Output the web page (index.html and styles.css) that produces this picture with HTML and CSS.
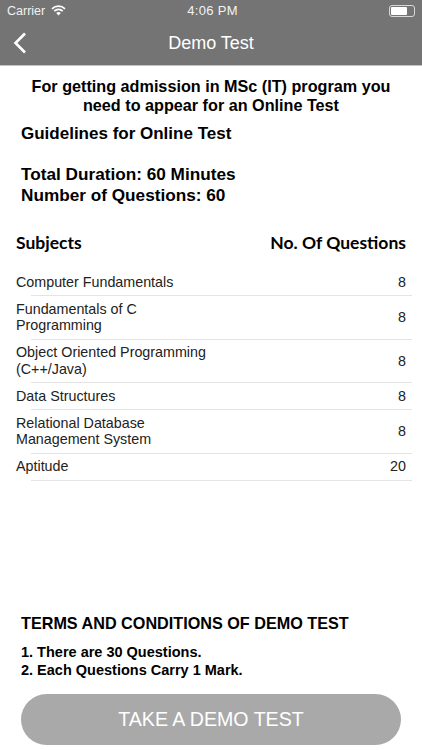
FILE: index.html
```html
<!DOCTYPE html>
<html lang="en">
<head>
    <meta charset="UTF-8">
    <meta name="viewport" content="width=device-width, initial-scale=1.0">
    <title>Demo Test</title>
    <link rel="stylesheet" href="styles.css">
</head>
<body>
<div class="screen">
    <!-- Status bar + nav -->
    <header class="top">
        <div class="status">
            <div class="status-left">
                <span>Carrier</span>
                <svg class="wifi" width="15" height="11" viewBox="0 0 15 11">
                    <path d="M1 3.8a9.2 9.2 0 0 1 13 0" fill="none" stroke="#fff" stroke-width="1.7"/>
                    <path d="M3.3 6.1a5.9 5.9 0 0 1 8.4 0" fill="none" stroke="#fff" stroke-width="1.7"/>
                    <path d="M5.2 8l2.3 2.6L9.8 8a3.3 3.3 0 0 0-4.6 0z" fill="#fff"/>
                </svg>
            </div>
            <span class="clock">4:06 PM</span>
            <div class="status-right">
                <div class="battery"><div class="battery-fill"></div></div>
            </div>
        </div>
        <div class="nav">
            <svg class="back" width="14" height="22" viewBox="0 0 14 22">
                <path d="M12 1.5L2.5 11l9.5 9.5" fill="none" stroke="#fff" stroke-width="2.6"/>
            </svg>
            <span class="nav-title">Demo Test</span>
        </div>
    </header>

    <h1 class="intro">For getting admission in MSc (IT) program you need to appear for an Online Test</h1>

    <div class="guide">
        <p class="guide-title">Guidelines for Online Test</p>
        <p class="guide-gap">Total Duration: 60 Minutes</p>
        <p>Number of Questions: 60</p>
    </div>

    <div class="table-head">
        <span>Subjects</span>
        <span>No. Of Questions</span>
    </div>

    <div class="rows">
        <div class="row"><span>Computer Fundamentals</span><span>8</span></div>
        <div class="row"><span>Fundamentals of C<br>Programming</span><span>8</span></div>
        <div class="row"><span>Object Oriented Programming<br>(C++/Java)</span><span>8</span></div>
        <div class="row"><span>Data Structures</span><span>8</span></div>
        <div class="row"><span>Relational Database<br>Management System</span><span>8</span></div>
        <div class="row"><span>Aptitude</span><span>20</span></div>
    </div>

    <!-- Terms + button -->
    <div class="bottom">
        <h2 class="terms-title">TERMS AND CONDITIONS OF DEMO TEST</h2>
        <p class="terms">1. There are 30 Questions.<br>2. Each Questions Carry 1 Mark.</p>
        <button class="demo-btn">TAKE A DEMO TEST</button>
    </div>
</div>
</body>
</html>
```

FILE: styles.css
```css
body {
    margin: 0;
    background-color: #fff;
    color: #000;
    font-family: 'Liberation Sans', Arial, sans-serif;
}

.screen {
    display: flex;
    flex-direction: column;
    height: 750px;
    overflow: hidden;
}

/* Header */
.top {
    height: 65px;
    background-color: #747474;
    border-bottom: 1px solid #c4c4c4;
    color: #fff;
}

.status {
    display: flex;
    align-items: center;
    justify-content: space-between;
    height: 21px;
    padding: 0 6px 0 7px;
    font-size: 12.5px;
    color: #f2f2f2;
}

.status-left {
    display: flex;
    flex: 1;
    align-items: center;
    gap: 6px;
}

.status-right {
    display: flex;
    flex: 1;
    justify-content: flex-end;
}

.clock {
    margin-left: 2px;
    font-size: 13px;
    letter-spacing: 0.3px;
}

.battery {
    width: 22px;
    height: 8px;
    padding: 1px;
    border: 1px solid #d8d8d8;
    border-radius: 3px;
    margin-right: 1px;
}

.battery-fill {
    width: 16px;
    height: 8px;
    background-color: #fff;
    border-radius: 1px;
}

.nav {
    display: flex;
    align-items: center;
    justify-content: center;
    position: relative;
    height: 44px;
}

.back {
    position: absolute;
    left: 13px;
    top: 11px;
}

.nav-title {
    font-size: 18px;
}

/* Intro text */
.intro {
    margin: 11px 20px 0;
    font-size: 16.2px;
    line-height: 19px;
    font-weight: bold;
    text-align: center;
}

.guide {
    margin: 8px 21px 0;
    font-size: 17.2px;
    line-height: 21px;
    font-weight: bold;
}

.guide p {
    margin: 0;
}

.guide .guide-title {
    font-size: 17px;
}

.guide .guide-gap {
    margin-top: 20px;
}

/* Subjects table */
.table-head {
    display: flex;
    justify-content: space-between;
    margin: 26px 16px 0;
    font-family: Lato, sans-serif;
    font-size: 17.5px;
    font-weight: bold;
}

.rows {
    margin-top: 16px;
}

.row {
    display: flex;
    align-items: center;
    justify-content: space-between;
    box-sizing: border-box;
    margin: 0 10px 0 31px;
    padding: 4.75px 6px 4.75px 0;
    border-bottom: 1px solid #e4e4e4;
    font-size: 14.3px;
    line-height: 16.5px;
    color: #222;
}

.row span:first-child {
    margin-left: -15px;
}

/* Bottom area */
.bottom {
    margin-top: auto;
    padding: 0 21px 5px;
}

.terms-title {
    margin: 0;
    font-size: 16.2px;
    font-weight: bold;
}

.terms {
    margin: 11px 0 0;
    font-size: 14.5px;
    line-height: 17.5px;
    font-weight: bold;
}

.demo-btn {
    display: block;
    width: 100%;
    height: 51px;
    margin-top: 15px;
    border: none;
    border-radius: 26px;
    background-color: #a9a9a9;
    color: #fff;
    font-family: inherit;
    font-size: 19.6px;
}
```
